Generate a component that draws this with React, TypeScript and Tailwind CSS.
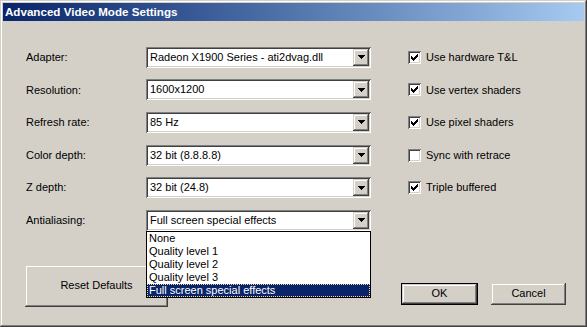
import React from "react";

const raised =
  "shadow-[inset_-1px_-1px_#404040,inset_1px_1px_#D4D0C8,inset_-2px_-2px_#808080,inset_2px_2px_#ffffff]";
const sunken =
  "shadow-[inset_1px_1px_#808080,inset_-1px_-1px_#ffffff,inset_2px_2px_#404040,inset_-2px_-2px_#D4D0C8]";

const rows = [
  { label: "Adapter:", value: "Radeon X1900 Series - ati2dvag.dll" },
  { label: "Resolution:", value: "1600x1200" },
  { label: "Refresh rate:", value: "85 Hz" },
  { label: "Color depth:", value: "32 bit (8.8.8.8)" },
  { label: "Z depth:", value: "32 bit (24.8)" },
  { label: "Antialiasing:", value: "Full screen special effects" },
];

const options = [
  { label: "Use hardware T&L", checked: true },
  { label: "Use vertex shaders", checked: true },
  { label: "Use pixel shaders", checked: true },
  { label: "Sync with retrace", checked: false },
  { label: "Triple buffered", checked: true },
];

const listItems = ["None", "Quality level 1", "Quality level 2", "Quality level 3", "Full screen special effects"];

function DropButton() {
  return (
    <div className={`flex h-[17px] w-[16px] items-center justify-center bg-[#D4D0C8] ${raised}`}>
      <svg width="7" height="4" viewBox="0 0 7 4" shapeRendering="crispEdges">
        <path d="M0 0h7v1H0z M1 1h5v1H1z M2 2h3v1H2z M3 3h1v1H3z" fill="#000" />
      </svg>
    </div>
  );
}

function Combo({ value, open }: { value: string; open?: boolean }) {
  return (
    <div className="relative">
      <div className={`flex h-[21px] w-[225px] items-center bg-white p-[2px] ${sunken}`}>
        <span className="flex-1 truncate pl-[2px] leading-none">{value}</span>
        <DropButton />
      </div>
      {open && (
        <div className="absolute left-0 top-[21px] z-10 w-[225px] border border-black bg-white">
          {listItems.map((item, i) => (
            <div
              key={item}
              className={
                i === listItems.length - 1
                  ? "flex h-[13px] items-center border border-dotted border-[#F5DB95] bg-[#0A246A] pl-[1px] text-white"
                  : "flex h-[13px] items-center pl-[2px]"
              }
            >
              {item}
            </div>
          ))}
        </div>
      )}
    </div>
  );
}

function Checkbox({ checked }: { checked: boolean }) {
  return (
    <div className={`flex h-[13px] w-[13px] items-center justify-center bg-white ${sunken}`}>
      {checked && (
        <svg width="7" height="7" viewBox="0 0 7 7" shapeRendering="crispEdges">
          <path
            d="M6 0h1v1H6z M5 1h2v1H5z M0 2h1v1H0z M4 2h3v1H4z M0 3h2v1H0z M3 3h3v1H3z M0 4h5v1H0z M1 5h3v1H1z M2 6h1v1H2z"
            fill="#000"
          />
        </svg>
      )}
    </div>
  );
}

export default function App() {
  return (
    <div
      className={`flex h-[327px] w-[587px] flex-col bg-[#D4D0C8] p-[3px] text-[11px] text-black ${raised}`}
      style={{ fontFamily: '"Liberation Sans", Arial, sans-serif' }}
    >
      {/* Title bar */}
      <div className="flex h-[18px] items-center bg-gradient-to-r from-[#0A246A] to-[#A6CAF0] pl-[2px]">
        <span className="text-[11.6px] font-bold text-white">Advanced Video Mode Settings</span>
      </div>

      {/* Settings */}
      <div className="flex pl-[23px] pt-[20px]">
        <div className="flex flex-col">
          {rows.map((r, i) => (
            <div key={r.label} className="flex h-[32.6px] items-center">
              <span className="w-[120px]">{r.label}</span>
              <Combo value={r.value} open={i === rows.length - 1} />
            </div>
          ))}
        </div>
        <div className="ml-[37px] flex flex-col">
          {options.map((o) => (
            <div key={o.label} className="flex h-[32.6px] items-center gap-[5px]">
              <Checkbox checked={o.checked} />
              <span>{o.label}</span>
            </div>
          ))}
        </div>
      </div>

      {/* Buttons */}
      <div className="mt-[28px] flex items-start pl-[22px]">
        <button className={`h-[42px] w-[143px] bg-[#D4D0C8] text-center ${raised}`}>Reset Defaults</button>
        <button className="ml-[233px] mt-[18px] h-[22px] w-[77px] border border-black bg-[#D4D0C8]">
          <div className={`flex h-full w-full items-center justify-center ${raised}`}>OK</div>
        </button>
        <button className={`ml-[13px] mt-[18px] h-[22px] w-[75px] bg-[#D4D0C8] ${raised}`}>Cancel</button>
      </div>
    </div>
  );
}
